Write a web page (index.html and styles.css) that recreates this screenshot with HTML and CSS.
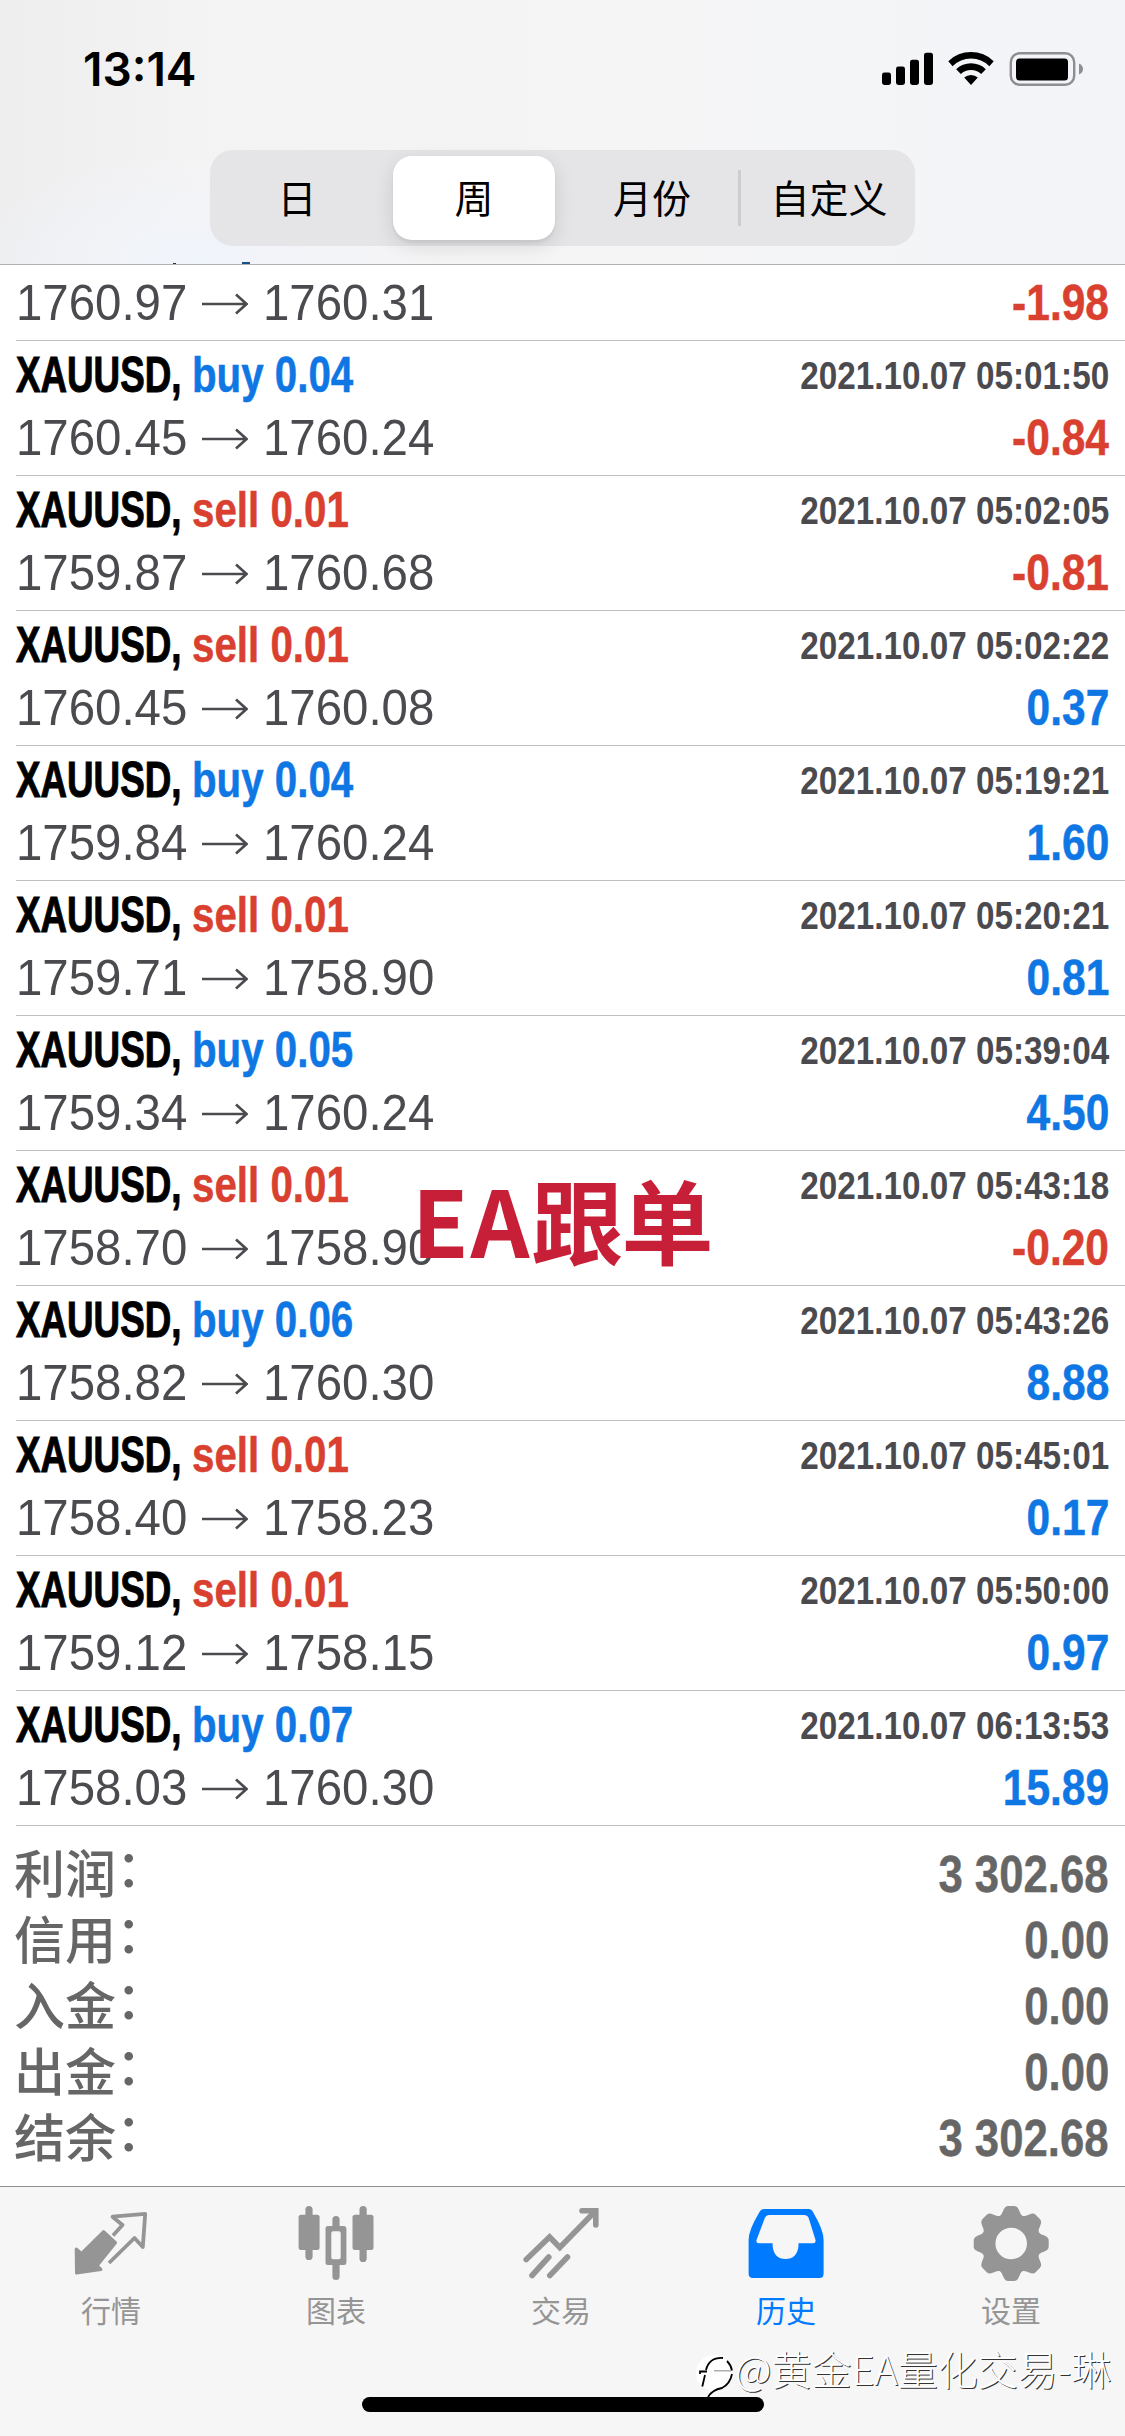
FILE: index.html
```html
<!DOCTYPE html>
<html lang="zh-CN">
<head>
<meta charset="utf-8">
<title>历史</title>
<link rel="stylesheet" href="styles.css">
</head>
<body>
<div class="screen">
  <header class="top">
    <div class="status">
      <span class="clock">13:14</span>
      <svg class="status-icons" width="202" height="36" viewBox="0 0 202 36">
        <rect x="1" y="21.500" width="9" height="12.500" rx="2.400"/>
        <rect x="15" y="15.500" width="9" height="18.500" rx="2.400"/>
        <rect x="29" y="8.700" width="9" height="25.300" rx="2.400"/>
        <rect x="43" y="1.700" width="9" height="32.300" rx="2.400"/>
        <path d="M67.300 10.200a32.500 32.500 0 0 1 45.400 0l-4.300 5a26 26 0 0 0-36.800 0z"/>
        <path d="M75.200 18.200a21.400 21.400 0 0 1 29.600 0l-4.600 4.900a14.800 14.800 0 0 0-20.400 0z"/>
        <path d="M83.200 26.600a10 10 0 0 1 13.600 0l-6.800 7.300z"/>
        <rect x="129.800" y="2.300" width="63.400" height="31.400" rx="9" fill="none" stroke="#8e8e90" stroke-width="2.400"/>
        <rect x="135" y="7.500" width="52" height="22" rx="3.500"/>
        <path d="M198 12.500q4 2 4 5.500t-4 5.500z" fill="#8e8e90"/>
      </svg>
    </div>
    <nav class="segments">
      <span class="segment segment-first">日</span>
      <span class="segment segment-on">周</span>
      <span class="segment segment-wide">月份</span>
      <span class="segment segment-wide segment-rule">自定义</span>
    </nav>
  </header>

  <main class="list" id="list"></main>

  <section class="summary">
    <div class="total"><span>利润<i>：</i></span><b>3 302.68</b></div>
    <div class="total"><span>信用<i>：</i></span><b>0.00</b></div>
    <div class="total"><span>入金<i>：</i></span><b>0.00</b></div>
    <div class="total"><span>出金<i>：</i></span><b>0.00</b></div>
    <div class="total"><span>结余<i>：</i></span><b>3 302.68</b></div>
  </section>

  <footer class="tabs">
    <div class="tab">
      <svg class="tab-icon" viewBox="0 0 80 80">
        <path d="M31.600 27.500L43.500 38.700 25.200 61.500 29 65.500 4.500 69 4.200 45 9.400 49.500z" fill="currentColor" stroke="currentColor" stroke-width="3" stroke-linejoin="round"/>
        <path d="M41 31.500L50.500 21 40.500 12.700 73.200 9.800 70.800 43 62.500 34 37 59" fill="none" stroke="currentColor" stroke-width="3.800" stroke-linejoin="round"/>
      </svg>
      <span>行情</span>
    </div>
    <div class="tab">
      <svg class="tab-icon" viewBox="0 0 80 80" fill="currentColor">
        <rect x="1.600" y="10.700" width="21" height="35.300" rx="2.500"/><rect x="8.400" y="2" width="7.200" height="54" rx="3.600"/>
        <path fill-rule="evenodd" d="M31 22h16q2.400 0 2.400 2.500v34q0 2.500-2.400 2.500H31q-2.500 0-2.500-2.500v-34q0-2.500 2.500-2.500zM36 27.300q-1.700 0-1.700 2v24q0 2 1.700 2h6q1.700 0 1.700-2v-24q0-2-1.700-2z"/>
        <path d="M35.400 23v-7.500a3.600 3.600 0 0 1 7.200 0V23zM35.400 60v12.500a3.600 3.600 0 0 0 7.200 0V60z"/>
        <rect x="55.500" y="10.700" width="21" height="35.300" rx="2.500"/><rect x="62.500" y="2" width="7.200" height="56" rx="3.600"/>
      </svg>
      <span>图表</span>
    </div>
    <div class="tab">
      <svg class="tab-icon" viewBox="0 0 80 80" fill="none" stroke="currentColor" stroke-width="5.600" stroke-linecap="round">
        <path d="M4.200 55.500L27.600 33 37.800 43.500 72.500 8M60 6.800h13.800v14.200M10 71.500L26.800 53M27.800 71.500L45.500 53"/>
      </svg>
      <span>交易</span>
    </div>
    <div class="tab tab-on">
      <svg class="tab-icon" viewBox="0 0 80 80" fill="currentColor">
        <path fill-rule="evenodd" d="M17 5H61.500Q64.500 5 66 8 76.600 26 76.600 36V69.500Q76.600 74 72.500 74H6Q1.600 74 1.600 69.500V36Q1.600 26 12.500 8 14 5 17 5zM22 11Q19 11 18 13.500L9.500 36Q8.800 39.300 12 39.300H25.600V42Q27 55 38.500 55T51.500 42V39.300H66Q69.200 39.300 68.500 36L61.500 13.500Q60.500 11 57.500 11z"/>
      </svg>
      <span>历史</span>
    </div>
    <div class="tab">
      <svg class="tab-icon" viewBox="0 0 80 80">
        <defs><path id="tooth" d="M-14-26C-9-28.500-9.500-30-7.500-34Q-6-37.500-3-37.500H3Q6-37.500 7.500-34C9.500-30 9-28.500 14-26z"/></defs>
        <g transform="translate(39.200 39.500)" fill="currentColor">
          <circle r="22.500" fill="none" stroke="currentColor" stroke-width="13.500"/>
          <use href="#tooth"/><use href="#tooth" transform="rotate(45)"/><use href="#tooth" transform="rotate(90)"/><use href="#tooth" transform="rotate(135)"/><use href="#tooth" transform="rotate(180)"/><use href="#tooth" transform="rotate(225)"/><use href="#tooth" transform="rotate(270)"/><use href="#tooth" transform="rotate(315)"/>
        </g>
      </svg>
      <span>设置</span>
    </div>
  </footer>

  <div class="home-bar"></div>
  <div class="stamp"><span>EA</span>跟单</div>
  <div class="credit">
    <svg width="44" height="50" viewBox="0 0 44 50">
      <circle cx="20" cy="23" r="18" fill="#fff"/>
      <g fill="none" stroke="#000" stroke-width="1.800">
        <path d="M12 20C14 12 20 7.500 29 8M6 24v-2.500h7M11 25L8.300 36.500M33 11q4 4 5 9.500"/>
        <path d="M38 24Q36 34 28 38 18 40 14 47"/>
        <path d="M20 20.800H37" stroke="#999" stroke-width="1.200"/>
      </g>
    </svg>
    <span>@黄金EA量化交易-琳</span>
  </div>
</div>
<script src="rows.js"></script>
</body>
</html>
```
FILE: rows.js
```js
const deals = [
  [null, null, null, "1760.97", "1760.31", "-1.98"],
  ["buy", "0.04", "05:01:50", "1760.45", "1760.24", "-0.84"],
  ["sell", "0.01", "05:02:05", "1759.87", "1760.68", "-0.81"],
  ["sell", "0.01", "05:02:22", "1760.45", "1760.08", "0.37"],
  ["buy", "0.04", "05:19:21", "1759.84", "1760.24", "1.60"],
  ["sell", "0.01", "05:20:21", "1759.71", "1758.90", "0.81"],
  ["buy", "0.05", "05:39:04", "1759.34", "1760.24", "4.50"],
  ["sell", "0.01", "05:43:18", "1758.70", "1758.90", "-0.20"],
  ["buy", "0.06", "05:43:26", "1758.82", "1760.30", "8.88"],
  ["sell", "0.01", "05:45:01", "1758.40", "1758.23", "0.17"],
  ["sell", "0.01", "05:50:00", "1759.12", "1758.15", "0.97"],
  ["buy", "0.07", "06:13:53", "1758.03", "1760.30", "15.89"]
];

const arrow = '<svg class="arrow" viewBox="0 0 46 22"><path d="M0 11H44M34 1.500L44.500 11 34 20.500"/></svg>';

document.getElementById("list").innerHTML = deals.map(([side, lots, time, from, to, profit]) => `
  <article class="deal${side ? "" : " deal-cut"}">
    ${side ? `<div class="line">
      <span class="title"><span class="name">XAUUSD,</span><span class="order ${side}">${side} ${lots}</span></span>
      <span class="time">2021.10.07 ${time}</span>
    </div>` : ""}
    <div class="line">
      <span class="prices"><span class="price">${from}</span>${arrow}<span class="price">${to}</span></span>
      <span class="profit ${profit[0] === "-" ? "sell" : "buy"}">${profit}</span>
    </div>
  </article>`).join("");
```
FILE: styles.css
```css
* { box-sizing: border-box; }
body { margin: 0; background: #fff; }
.screen {
  position: relative;
  width: 1125px;
  height: 2436px;
  overflow: hidden;
  display: flex;
  flex-direction: column;
  font-family: "Liberation Sans", "Noto Sans CJK SC", sans-serif;
  background: #fff;
}

/* status bar and period switch */
.top {
  height: 265px;
  flex: none;
  border-bottom: 1px solid #b2b2b4;
  background:
    linear-gradient(#333, #333) 173px 263px / 3px 1px no-repeat,
    linear-gradient(#1d4f87, #1d4f87) 242px 262px / 8px 2px no-repeat,
    radial-gradient(ellipse 240px 110px at 200px 265px, #f0f4fb, rgba(240, 244, 251, 0)),
    linear-gradient(90deg, #eeeeef 0, #f4f3f4 200px, #f6f5f6 560px, #f4f5f7 850px, #f3f4f8 1125px);
}
.status {
  height: 150px;
  padding: 51px 42px 0 83px;
  display: flex;
  justify-content: space-between;
  align-items: flex-start;
}
.clock {
  font: 600 46px/37px Inter, sans-serif;
  color: #000;
}
.segments {
  width: 705px;
  height: 96px;
  margin-left: 210px;
  padding: 6px;
  border-radius: 23px;
  display: grid;
  grid-template-columns: 177px 162px 183px 1fr;
  background: #e5e5e7;
}
.segment {
  display: flex;
  justify-content: center;
  font: 400 39px/80px "Noto Sans CJK SC", sans-serif;
}
.segment-first { padding-right: 15px; }
.segment-wide { padding-left: 11px; }
.segment-on {
  border-radius: 19px;
  background: #fff;
  box-shadow: 0 6px 20px rgba(0, 0, 0, .12), 0 3px 3px rgba(0, 0, 0, .05);
}
.segment-rule {
  background: linear-gradient(#cdcdd0, #cdcdd0) 0 14px / 3px 56px no-repeat;
}

/* deals */
.deal {
  height: 135px;
  margin-left: 16px;
  padding: 3px 16px 0 0;
  border-bottom: 1px solid #c0c0c2;
}
.deal-cut { height: 76px; padding-top: 7px; }
.line {
  height: 63px;
  display: flex;
  align-items: center;
  justify-content: space-between;
  white-space: nowrap;
}
.title {
  display: flex;
  font-weight: 700;
  font-size: 50px;
  line-height: 63px;
}
.name {
  width: 176px;
  color: #000;
  -webkit-text-stroke: 1px;
  transform: scaleX(.735);
  transform-origin: left;
}
.order {
  -webkit-text-stroke: .5px;
  transform: scaleX(.806);
  transform-origin: left;
}
.time {
  font-weight: 700;
  font-size: 39px;
  line-height: 63px;
  color: #4b4b4f;
  transform: scaleX(.853);
  transform-origin: right;
}
.prices { display: flex; align-items: center; color: #4b4b4f; }
.price {
  width: 186px;
  font-size: 50px;
  line-height: 63px;
  transform: scaleX(.948);
  transform-origin: left;
}
.arrow {
  width: 46px;
  height: 22px;
  margin-right: 15px;
  fill: none;
  stroke: currentColor;
  stroke-width: 2.6;
}
.profit {
  font-weight: 700;
  font-size: 50px;
  line-height: 63px;
  -webkit-text-stroke: .5px;
  transform: scaleX(.85);
  transform-origin: right;
}
.buy { color: #0f77e4; }
.sell { color: #d9402f; }

/* totals */
.summary { height: 360px; padding: 15px 16px 0 14px; color: #666; }
.total {
  height: 66px;
  display: flex;
  align-items: center;
  justify-content: space-between;
}
.total span {
  padding-bottom: 6px;
  font: 500 51px/60px "Noto Sans CJK SC", sans-serif;
}
.total i {
  position: relative;
  top: -6px;
  font-style: normal;
}
.total b {
  padding-top: 2px;
  font-size: 51px;
  line-height: 64px;
  -webkit-text-stroke: .4px;
  transform: scaleX(.857);
  transform-origin: right;
}

/* tab bar */
.tabs {
  height: 250px;
  padding-top: 17px;
  border-top: 1px solid #8f8f91;
  display: grid;
  grid-template-columns: repeat(5, 1fr);
  background: #f6f6f6;
}
.tab {
  display: flex;
  flex-direction: column;
  align-items: center;
  color: #959595;
  font: 400 30px/44px "Noto Sans CJK SC", sans-serif;
}
.tab span { padding-right: 3px; }
.tab-on { color: #007aff; }
.tab-icon { width: 80px; height: 80px; margin: 0 1px 3px 0; }

/* overlays */
.home-bar {
  position: absolute;
  left: 362px;
  top: 2397px;
  width: 402px;
  height: 15px;
  border-radius: 8px;
  background: #000;
}
.stamp {
  position: absolute;
  left: 412px;
  top: 1163px;
  font: 700 92px/110px "Noto Sans CJK SC", sans-serif;
  letter-spacing: -2px;
  color: #c71f37;
}
.stamp span { letter-spacing: 2px; }
.credit {
  position: absolute;
  left: 694px;
  top: 2350px;
  display: flex;
  align-items: flex-start;
}
.credit span {
  margin: -4px 0 0 -3px;
  font: 300 40px/44px "Noto Sans CJK SC", sans-serif;
  color: #fff;
  text-shadow: 1px 1px 0 #333;
  white-space: nowrap;
}
```
